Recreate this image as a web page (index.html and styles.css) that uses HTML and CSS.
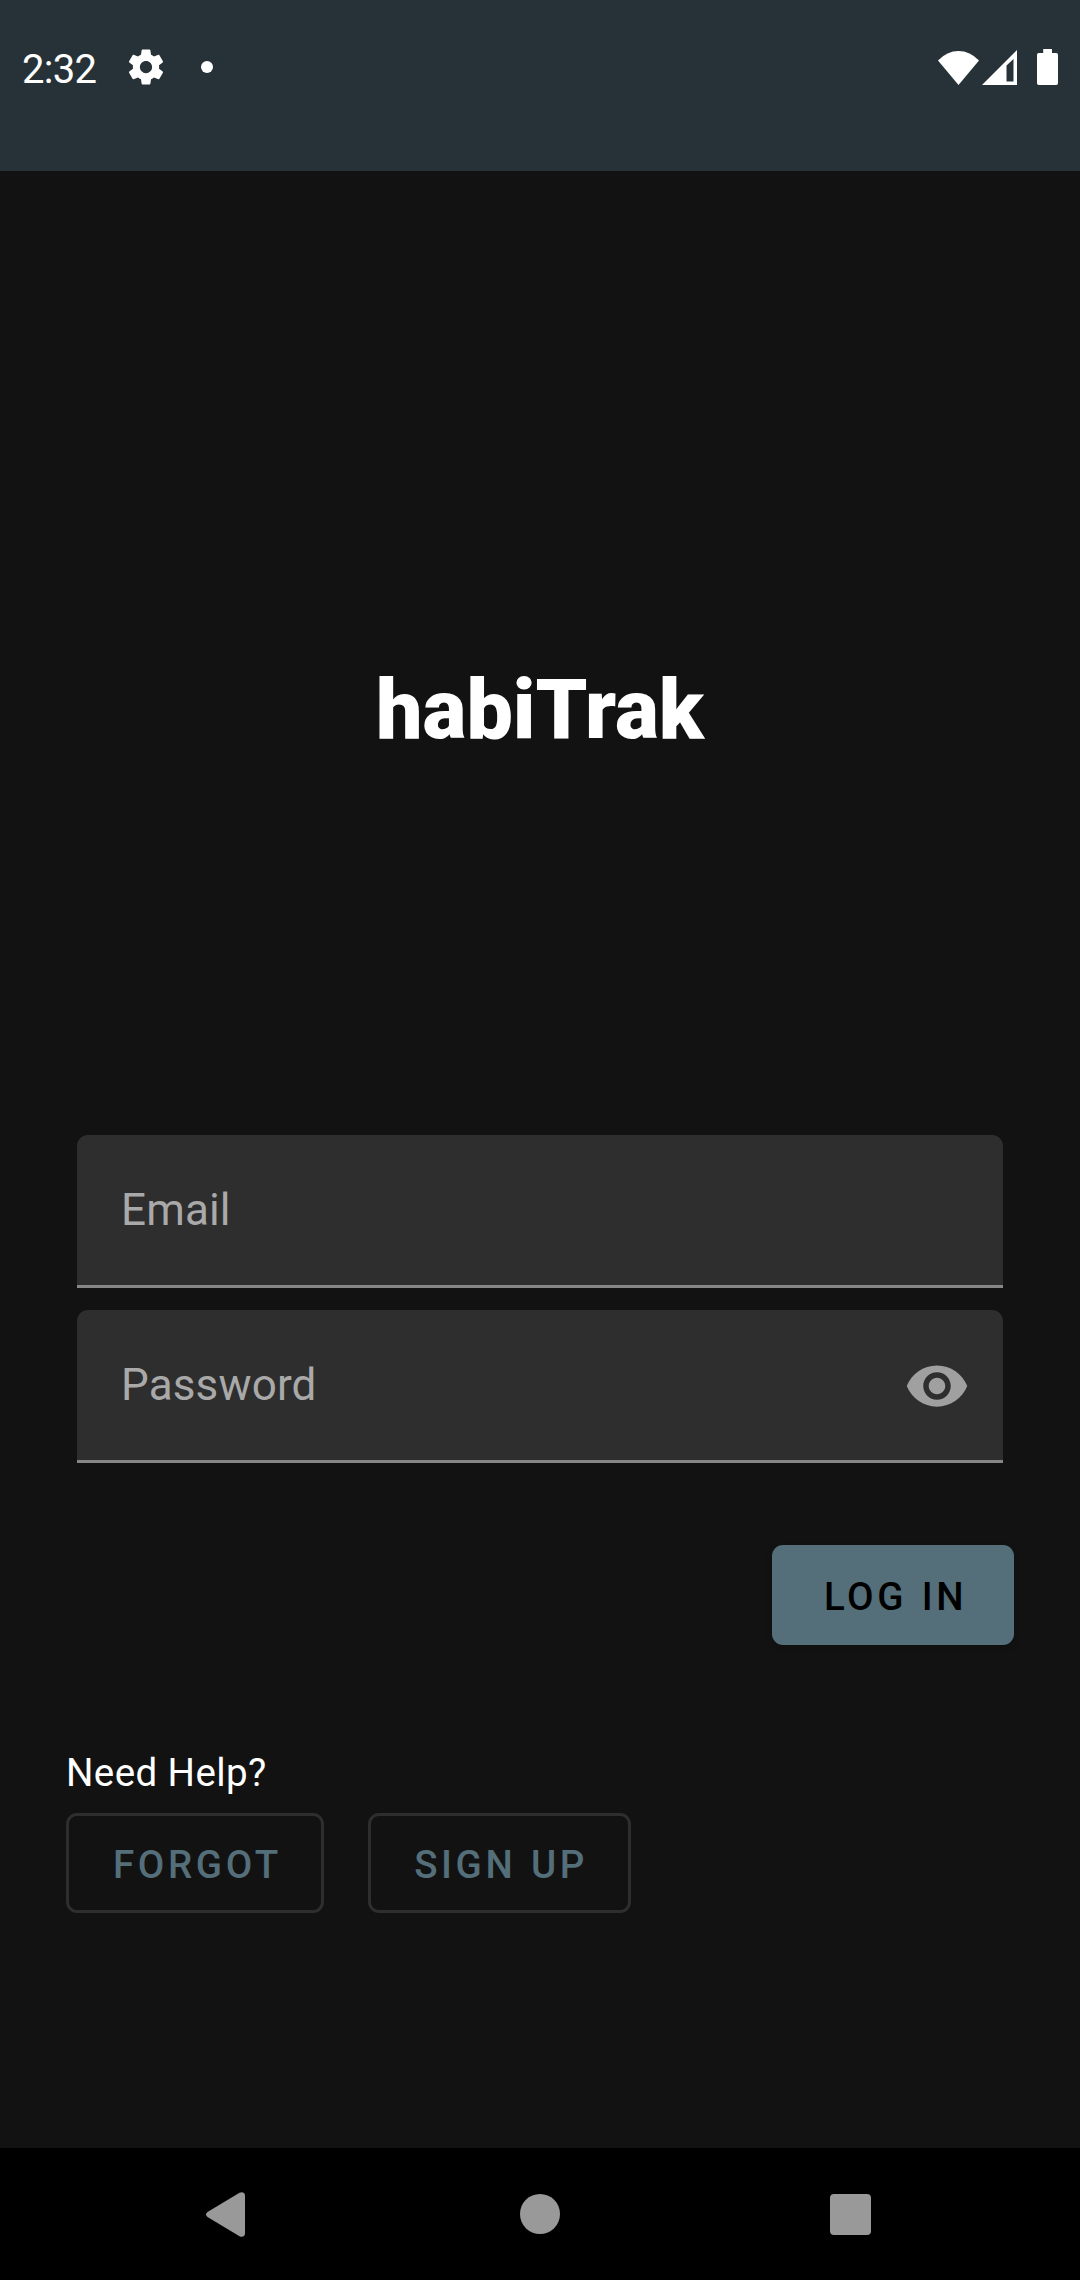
FILE: index.html
```html
<!DOCTYPE html>
<html lang="en">
<head>
<meta charset="utf-8">
<title>habiTrak</title>
<link rel="stylesheet" href="styles.css">
</head>
<body>
<div class="screen">
  <header class="status-bar">
    <div class="status-left">
      <span class="clock">2:32</span>
      <svg class="gear" viewBox="0 0 24 24" fill="currentColor"><path d="M19.43 12.98c.04-.32.07-.64.07-.98s-.03-.66-.07-.98l2.11-1.65c.19-.15.24-.42.12-.64l-2-3.46c-.12-.22-.39-.3-.61-.22l-2.49 1c-.52-.4-1.08-.73-1.69-.98l-.38-2.65C14.46 2.18 14.25 2 14 2h-4c-.25 0-.46.18-.49.42l-.38 2.65c-.61.25-1.17.59-1.69.98l-2.49-1c-.23-.09-.49 0-.61.22l-2 3.46c-.13.22-.07.49.12.64l2.11 1.65c-.04.32-.07.65-.07.98s.03.66.07.98l-2.11 1.65c-.19.15-.24.42-.12.64l2 3.46c.12.22.39.3.61.22l2.49-1c.52.4 1.08.73 1.69.98l.38 2.65c.03.24.24.42.49.42h4c.25 0 .46-.18.49-.42l.38-2.65c.61-.25 1.17-.59 1.69-.98l2.49 1c.23.09.49 0 .61-.22l2-3.46c.12-.22.07-.49-.12-.64l-2.11-1.65zM12 15.5c-1.930 0-3.500-1.570-3.500-3.500s1.570-3.500 3.500-3.500 3.500 1.570 3.500 3.500-1.570 3.500-3.500 3.500z"/></svg>
      <span class="dot"></span>
    </div>
    <div class="status-right">
      <svg class="wifi" viewBox="0 0 41 34" fill="currentColor"><path d="M20.500 34 0 9.500Q9 0 20.500 0T41 9.500z"/></svg>
      <svg class="signal" viewBox="0 0 35 35" fill="currentColor"><path fill-rule="evenodd" d="M35 0V35H0zM31.500 9 24.500 15.500V31.500h7z"/></svg>
      <svg class="battery" viewBox="0 0 21 36" fill="currentColor"><path d="M6.200 0h8.800v4H19.300Q21 4 21 5.700V34.300Q21 36 19.300 36H1.700Q0 36 0 34.300V5.700Q0 4 1.700 4H6.200z"/></svg>
    </div>
  </header>

  <main class="content">
    <h1 class="title">habiTrak</h1>
    <form class="fields">
      <div class="field"><span>Email</span></div>
      <div class="field">
        <span>Password</span>
        <svg class="eye" viewBox="0 0 24 24" fill="currentColor"><path d="M12 4.500C7 4.500 2.730 7.610 1 12c1.730 4.390 6 7.500 11 7.500s9.270-3.110 11-7.500c-1.730-4.390-6-7.500-11-7.500zM12 17c-2.760 0-5-2.240-5-5s2.240-5 5-5 5 2.240 5 5-2.240 5-5 5zm0-8c-1.660 0-3 1.340-3 3s1.340 3 3 3 3-1.340 3-3-1.340-3-3-3z"/></svg>
      </div>
    </form>
    <button class="button login" type="button">LOG IN</button>
    <section class="help">
      <p class="help-label">Need Help?</p>
      <div class="help-actions">
        <button class="button outlined forgot" type="button">FORGOT</button>
        <button class="button outlined signup" type="button">SIGN UP</button>
      </div>
    </section>
  </main>

  <nav class="nav-bar">
    <svg class="back" viewBox="0 0 39 45" fill="currentColor"><path d="M1.500 20 33.500.8Q36 -.5 38 1 39 2 39 4V41Q39 43 38 44 36 45.500 33.500 44.200L1.500 25Q-1.500 22.500 1.500 20z"/></svg>
    <span class="home"></span>
    <span class="recent"></span>
  </nav>
</div>
</body>
</html>
```
FILE: styles.css
```css
* { box-sizing: border-box; }
body { margin: 0; background: #121212; }
.screen {
  display: flex;
  flex-direction: column;
  width: 1080px;
  height: 2280px;
  background: #121212;
  color: #fff;
  font-family: Roboto, sans-serif;
}

/* System status bar */
.status-bar {
  display: flex;
  justify-content: space-between;
  height: 171px;
  padding: 43px 22px 79px;
  background: #273238;
}
.status-left, .status-right { display: flex; align-items: center; }
.clock { width: 103px; padding-top: 5px; font-size: 40px; line-height: 44px; letter-spacing: -0.7px; }
.gear { width: 42px; height: 42px; margin-bottom: 1px; }
.dot { width: 12px; height: 12px; margin: 0 0 1px 34px; border-radius: 50%; background: #fff; }
.wifi { width: 41px; height: 34px; }
.signal { width: 35px; height: 35px; margin-left: 3px; }
.battery { width: 21px; height: 36px; margin: 0 0 1px 20px; }

/* Login screen */
.content { display: flex; flex: 1; flex-direction: column; padding: 490px 66px 0; }
.title {
  margin: 0 0 377px;
  font-size: 82.5px;
  font-weight: 900;
  line-height: 97px;
  text-align: center;
}
.fields { display: flex; flex-direction: column; gap: 22px; padding: 0 11px; }
.field {
  display: flex;
  align-items: center;
  justify-content: space-between;
  height: 153px;
  padding: 0 33px 0 44px;
  border-bottom: 3px solid #868686;
  border-radius: 11px 11px 0 0;
  background: #2e2e2e;
  color: #a9a9a9;
  font-size: 44px;
  letter-spacing: 0.15px;
}
.eye { width: 66px; height: 66px; margin-top: 2px; color: #a0a0a0; }
.button {
  height: 100px;
  padding: 3px 0 0 5px;
  border: 0;
  border-radius: 11px;
  font: 500 38.5px/46px Roboto, sans-serif;
  letter-spacing: 3.6px;
  word-spacing: 1.4px;
}
.login {
  align-self: flex-end;
  width: 242px;
  margin-top: 82px;
  background: #546e7a;
  color: #000;
  box-shadow: 0 3px 6px rgba(0, 0, 0, .2);
}
.help { margin-top: 105px; }
.help-label { margin: 0 0 17px; font-size: 38.5px; line-height: 46px; letter-spacing: 0.4px; }
.help-actions { display: flex; gap: 44px; }
.outlined { border: 3px solid #2e2e2e; background: transparent; color: #546e7a; }
.forgot { width: 258px; }
.signup { width: 263px; padding-left: 3px; }

/* System navigation */
.nav-bar {
  display: flex;
  align-items: center;
  justify-content: space-between;
  height: 132px;
  padding: 0 209px 0 206px;
  background: #000;
  color: #999;
}
.back { width: 39px; height: 45px; }
.home { width: 40px; height: 40px; margin-left: 5px; border-radius: 50%; background: #999; }
.recent { width: 41px; height: 41px; border-radius: 4px; background: #999; }
```
